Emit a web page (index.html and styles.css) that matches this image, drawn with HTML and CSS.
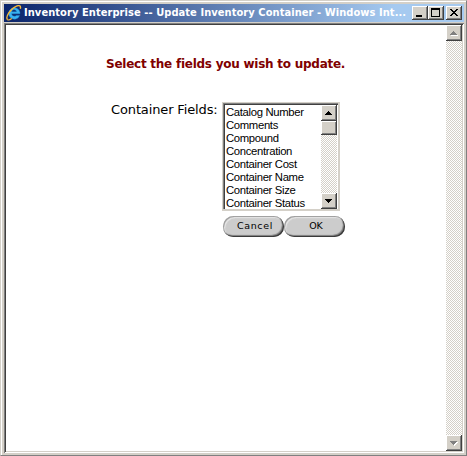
FILE: index.html
```html
<!DOCTYPE html>
<html lang="en">
<head>
<meta charset="utf-8">
<title>Update Inventory Container</title>
<link rel="stylesheet" href="styles.css">
</head>
<body>
<div class="window">
  <header class="titlebar">
    <svg class="logo" width="16" height="16" viewBox="0 0 16 16">
      <path d="M13.7 10.5A5.7 5.7 0 1 1 14 7.6v1.1H5.6c.3 2.7 3.8 3 4.7 1.8zM5.7 6.7h4.8c-.3-2.5-4.4-2.6-4.8 0z" fill="#3bb3f0" stroke="#1689d5" stroke-width=".4"/>
      <path d="M1.6 14.8C-1 12.2 4.4 3.5 10.5 1.1c3-1.2 4.6-.1 3.8 2.6" fill="none" stroke="#f4b739" stroke-width="1.4"/>
      <path d="M1.6 14.8c1 .5 2.6-.2 4.2-1.4" fill="none" stroke="#f4b739" stroke-width="1.2"/>
    </svg>
    <h1 class="title">Inventory Enterprise -- Update Inventory Container - Windows Int...</h1>
    <div class="controls">
      <span class="control"><svg width="16" height="14" shape-rendering="crispEdges"><path d="M4 9h6v2H4z"/></svg></span>
      <span class="control"><svg width="16" height="14" shape-rendering="crispEdges"><path fill-rule="evenodd" d="M3 2h9v9H3zM4 4v6h7V4z"/></svg></span>
      <span class="control close"><svg width="16" height="14" shape-rendering="crispEdges"><path d="M4 3h2v1h1v1h2V4h1V3h2v1h-1v1h-1v1H9v1h1v1h1v1h1v1h-2V9H9V8H7v1H6v1H4V9h1V8h1V7h1V6H6V5H5V4H4z"/></svg></span>
    </div>
  </header>
  <div class="client">
    <main class="page">
      <h2 class="heading">Select the fields you wish to update.</h2>
      <div class="form">
        <span class="label">Container Fields:</span>
        <div class="fields">
          <div class="listbox">
            <ul class="options">
              <li>Catalog Number</li><li>Comments</li><li>Compound</li><li>Concentration</li>
              <li>Container Cost</li><li>Container Name</li><li>Container Size</li><li>Container Status</li>
            </ul>
            <div class="scrollbar">
              <span class="arrow"><svg width="16" height="16" shape-rendering="crispEdges"><path d="M7 6h1v1h1v1h1v1h1v1H4V9h1V8h1V7h1z"/></svg></span>
              <span class="thumb"></span>
              <span class="track"></span>
              <span class="arrow"><svg width="16" height="16" shape-rendering="crispEdges"><path d="M4 6h7v1h-1v1H9v1H8v1H7V9H6V8H5V7H4z"/></svg></span>
            </div>
          </div>
          <div class="actions">
            <button class="pill cancel">Cancel</button>
            <button class="pill">OK</button>
          </div>
        </div>
      </div>
    </main>
    <div class="scrollbar disabled">
      <span class="arrow"><svg width="16" height="16" shape-rendering="crispEdges"><path fill="#fff" d="M8 7h1v1h1v1h1v1h1v1H5v-1h1V9h1V8h1z"/><path fill="#808080" d="M7 6h1v1h1v1h1v1h1v1H4V9h1V8h1V7h1z"/></svg></span>
      <span class="track"></span>
      <span class="arrow"><svg width="16" height="16" shape-rendering="crispEdges"><path fill="#fff" d="M5 7h7v1h-1v1h-1v1H9v1H8v-1H7V9H6V8H5z"/><path fill="#808080" d="M4 6h7v1h-1v1H9v1H8v1H7V9H6V8H5V7H4z"/></svg></span>
    </div>
  </div>
</div>
</body>
</html>
```
FILE: styles.css
```css
* { box-sizing: border-box; }
body { margin: 0; overflow: hidden; }
.window {
  display: flex;
  flex-direction: column;
  width: 467px;
  height: 456px;
  padding: 3px 2px 2px 3px;
  background: #d4d0c8;
  border: 1px solid #d4d0c8;
  border-right-color: #808080;
  border-bottom-color: #808080;
  box-shadow: inset 1px 1px #fff;
}
.titlebar {
  display: flex;
  align-items: center;
  width: 460px;
  height: 18px;
  margin-bottom: 1px;
  padding: 0 2px;
  background: linear-gradient(90deg, #0a246a, #a6caf0 85%);
}
.logo { flex: none; }
.title {
  flex: 1;
  margin: 0 0 0 2px;
  color: #fff;
  font: bold 11px/18px "DejaVu Sans Condensed", "DejaVu Sans", sans-serif;
  letter-spacing: 0.07px;
  white-space: nowrap;
}
.controls { display: flex; }
.control, .arrow, .thumb {
  display: block;
  background: #d4d0c8;
  box-shadow: inset -1px -1px #404040, inset 1px 1px #fff, inset -2px -2px #808080;
}
.control { width: 16px; height: 14px; }
.control svg, .arrow svg { display: block; }
.close { margin-left: 2px; }
.client {
  display: flex;
  width: 460px;
  height: 430px;
  padding: 2px;
  background: #fff;
  box-shadow: inset 1px 1px #808080, inset -1px -1px #fff, inset 2px 2px #404040, inset -2px -2px #d4d0c8;
}
.page { flex: 1; padding-top: 31px; }
.heading {
  margin: 0 0 0 100px;
  color: #800000;
  font: bold 12px/17px "DejaVu Sans", sans-serif;
  letter-spacing: -0.25px;
  white-space: nowrap;
}
.form { display: flex; margin: 29px 0 0 105px; }
.label {
  width: 111px;
  font: 13px/16px "DejaVu Sans", sans-serif;
  letter-spacing: -0.13px;
  white-space: nowrap;
}
.listbox {
  display: flex;
  width: 118px;
  height: 109px;
  padding: 3px 3px 2px 3px;
  border: 0;
  box-shadow: inset 1px 1px #d4d0c8, inset -2px -2px #d4d0c8, inset 2px 2px #808080, inset 3px 3px #404040;
}
.options {
  flex: 1;
  margin: 0;
  padding: 1px 0 0 1px;
  list-style: none;
  font: 11.3px/13px "Liberation Sans", sans-serif;
  letter-spacing: -0.33px;
  white-space: nowrap;
}
.scrollbar { display: flex; flex-direction: column; width: 16px; }
.arrow { width: 16px; height: 16px; }
.thumb { height: 14px; }
.track {
  flex: 1;
  background: repeating-conic-gradient(#d4d0c8 0 25%, #fff 0 50%) 0 0 / 2px 2px;
}
.actions { display: flex; margin: 5px 0 0 1px; }
.pill {
  width: 61px;
  height: 21px;
  padding: 0 0 1px 3px;
  border: 0;
  border-radius: 11px;
  background: #ccc;
  box-shadow: inset -1px -1px 1px #333, inset -2px -2px 1px #888, inset 1px 1px 1px #999, inset 2px 2px 1px #eee;
  color: #000;
  font: 9.5px/20px "DejaVu Sans", sans-serif;
}
.cancel { letter-spacing: 0.6px; }
```
